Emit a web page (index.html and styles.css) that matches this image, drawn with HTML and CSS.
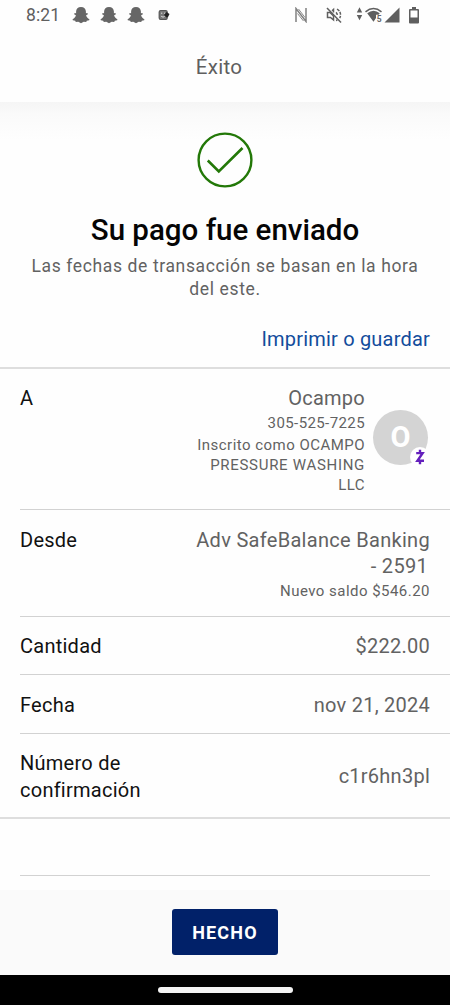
FILE: index.html
```html
<!DOCTYPE html>
<html lang="es">
<head>
<meta charset="utf-8">
<title>Éxito</title>
<link rel="stylesheet" href="styles.css">
</head>
<body>
<svg class="defs" aria-hidden="true">
  <symbol id="ghost" viewBox="0 0 18 18">
    <path d="M9 1C6 1 4.100 3 4.100 5.500V7.300L2.600 6.900 2.100 8.300 3.900 9.300C3.500 11 2.400 12.400.6 13.200L.8 14.300 3.200 14.800 3.800 15.900 6.300 15.700 9 17.300 11.700 15.700 14.200 15.900 14.800 14.800 17.200 14.300 17.400 13.200C15.600 12.400 14.500 11 14.100 9.300L15.900 8.300 15.400 6.900 13.900 7.300V5.500C13.900 3 12 1 9 1Z"/>
  </symbol>
</svg>
<div class="screen">
  <div class="status">
    <span class="time">8:21</span>
    <svg class="ghost"><use href="#ghost"/></svg>
    <svg class="ghost"><use href="#ghost"/></svg>
    <svg class="ghost"><use href="#ghost"/></svg>
    <svg class="note" viewBox="0 0 12 12">
      <rect x="1.200" y="1.500" width="8" height="9" rx="1.500" fill="#777" stroke="#555" stroke-width="1.200"/>
      <path d="M3 4.200h1.300M6 4.200h1.300M3.200 7.300q2 1.700 3.500 0" stroke="#ddd" fill="none"/>
      <path d="M6 6 8.500 3 11.500 5 10 8 8.500 8.500Z" fill="#222"/>
    </svg>
    <div class="system">
      <svg class="nfc" viewBox="0 0 14 16"><path d="M2 15V1.500L12 14.500V1" fill="none" stroke="#808080" stroke-width="1.500"/><path d="M4.500 2 11 10.500M3.500 6.500 9.500 14" fill="none" stroke="#8a8a8a"/></svg>
      <svg class="mute" viewBox="0 0 18 18" fill="none" stroke="#5f5f5f" stroke-width="1.500">
        <path d="M2 2 16 16.500"/><path d="M2.500 6.500H5L8.500 10V14L5.500 11.500H2.500Z"/><path d="M7 4.800 8.500 3.500V6.500"/><path d="M11 6.300q1.500 1.200 1.200 3.200M12 3.200q3.800 2 3.500 6.300-.1 1.500-.8 2.600M11 14.500q.8-.2 1.300-.6" stroke-dasharray="3 1"/>
      </svg>
      <svg class="signals" viewBox="0 0 46 18">
        <path d="M3.500 1.200 6.200 6.500H.8ZM.8 9H6.200L3.500 14.300Z" fill="#5f5f5f"/>
        <path d="M9.500 5.800Q17.500-.8 25.500 5.800" fill="none" stroke="#5f5f5f" stroke-width="1.500"/>
        <path d="M11.200 7.300Q17.500 2.300 23.800 7.300L22.500 8.800H20V12L17.500 15.800Z" fill="#5f5f5f"/>
        <text x="20.800" y="15.500" font-size="8.500" font-weight="700" fill="#666">5</text>
        <path d="M28.500 16.500 43.500 1.500V16.500Z" fill="#5f5f5f"/>
      </svg>
      <svg class="battery" viewBox="0 0 10 17"><path d="M3 0H7V2H9Q10 2 10 3V15.500Q10 16.500 9 16.500H1Q0 16.500 0 15.500V3Q0 2 1 2H3ZM1.500 3.500V10.500H8.500V3.500Z" fill="#5f5f5f" fill-rule="evenodd"/></svg>
    </div>
  </div>
  <header class="header">Éxito</header>
  <main class="content">
    <section class="hero">
      <svg class="check" viewBox="0 0 56 56" fill="none" stroke="#237808">
        <circle cx="28" cy="28" r="26.400" stroke-width="2.400"/>
        <path d="M10.800 28.500 21.800 39.500 45.500 16" stroke-width="2.600"/>
      </svg>
      <h1 class="title">Su pago fue enviado</h1>
      <p class="subtitle">Las fechas de transacción se basan en la hora del este.</p>
      <a class="print">Imprimir o guardar</a>
    </section>
    <section class="details">
      <div class="row row-to">
        <div class="label">A</div>
        <div class="value payee">
          <div>Ocampo</div>
          <div class="small phone">305-525-7225</div>
          <div class="small enrolled">Inscrito como OCAMPO <span class="company">PRESSURE WASHING</span> LLC</div>
        </div>
        <div class="avatar">O
          <svg class="zelle" viewBox="0 0 20 20"><circle cx="10" cy="10" r="10" fill="#fff"/><path d="M6.200 6.100H12.600L7.400 13.700H14M10 2.800V6M10 14V17.200" fill="none" stroke="#6420bd" stroke-width="2.400"/></svg>
        </div>
      </div>
      <div class="row row-from">
        <div class="label">Desde</div>
        <div class="value"><div class="account">Adv SafeBalance Banking<br><span class="digits">- 2591</span></div><div class="small">Nuevo saldo $546.20</div></div>
      </div>
      <div class="row"><div class="label">Cantidad</div><div class="value">$222.00</div></div>
      <div class="row row-date"><div class="label">Fecha</div><div class="value">nov 21, 2024</div></div>
      <div class="row row-code"><div class="label">Número de<br>confirmación</div><div class="value">c1r6hn3pl</div></div>
    </section>
    <div class="rule"></div>
  </main>
  <footer class="footer"><button class="done">HECHO</button></footer>
  <div class="navbar"><div class="handle"></div></div>
</div>
</body>
</html>
```
FILE: styles.css
```css
* { box-sizing: border-box; }
body { margin: 0; background: #fff; font-family: Roboto, sans-serif; color: #626262; }
.defs { position: absolute; width: 0; height: 0; }
.screen { width: 450px; height: 1005px; display: flex; flex-direction: column; overflow: hidden; background: #fefefe; }
.status { height: 32px; flex: none; display: flex; align-items: center; padding: 0 31px 2px 26px; }
.status svg { flex: none; }
.time { width: 46px; font-size: 17.5px; line-height: 30px; letter-spacing: .1px; color: #5f5f5f; }
.ghost { width: 18px; height: 18px; margin-right: 9.500px; fill: #666; }
.note { width: 12px; height: 12px; margin-left: 3px; }
.system { margin-left: auto; display: flex; align-items: center; }
.nfc { width: 14px; height: 16px; margin-right: 17px; }
.mute { width: 18px; height: 18px; margin-right: 13px; }
.signals { width: 46px; height: 18px; margin-right: 7px; }
.battery { width: 10px; height: 17px; }
.header { height: 70px; flex: none; text-align: center; font-size: 20.5px; line-height: 70px; padding-right: 12px; letter-spacing: .3px; color: #5f5f5f; }
.content { height: 788px; flex: none; background: linear-gradient(#f5f5f5, #fafafa 12px, #fefefe 38px); }
.hero { height: 265px; padding: 30px 20px 0; display: flex; flex-direction: column; align-items: center; }
.check { width: 56px; height: 56px; flex: none; }
.title { margin: 24px 0 0; font-size: 29.5px; line-height: 36px; font-weight: 500; color: #050505; white-space: nowrap; }
.subtitle { margin: 7px 0 0; width: 410px; font-size: 17.5px; line-height: 23px; letter-spacing: .62px; text-align: center; }
.print { margin-top: 24px; align-self: flex-end; font-size: 20px; line-height: 28px; letter-spacing: .2px; color: #134c9c; }
.details { border-top: 2px solid #dedede; border-bottom: 2px solid #dedede; padding-left: 20px; }
.row { height: 58px; padding: 2px 20px 0 0; display: flex; align-items: center; justify-content: space-between; border-bottom: 1px solid #d2d2d2; font-size: 20px; line-height: 26.500px; letter-spacing: .25px; }
.row:last-child { border-bottom: 0; }
.label { color: #111; }
.value { text-align: right; }
.small { font-size: 15px; line-height: 20px; letter-spacing: .47px; }
.row-to { height: 141px; align-items: flex-start; padding: 16px 22px 0 0; }
.payee { margin-left: auto; width: 180px; }
.phone { line-height: 23px; letter-spacing: .4px; }
.company { letter-spacing: .7px; }
.avatar { position: relative; flex: none; width: 55px; height: 55px; margin: 25px 0 0 8px; border-radius: 50%; background: #d4d4d4; color: #fff; font-size: 29px; line-height: 55px; font-weight: 700; text-align: center; letter-spacing: 0; }
.zelle { position: absolute; right: -2px; bottom: -2px; width: 20px; height: 20px; }
.row-from { height: 107px; align-items: flex-start; padding-top: 17px; }
.account { letter-spacing: .3px; line-height: 26px; }
.digits { padding-right: 2px; }
.row-from .small { line-height: 24px; }
.row-date { height: 59px; padding-top: 3px; }
.row-code { height: 83px; }
.rule { height: 1px; margin: 56px 20px 0; background: #d2d2d2; }
.footer { height: 85px; flex: none; display: flex; justify-content: center; padding-top: 19px; background: #fafafa; }
.done { width: 106px; height: 46px; padding: 2px 0 0; border: 0; border-radius: 3px; background: #012169; color: #fff; font: 700 18px/44px Roboto, sans-serif; letter-spacing: 1.200px; }
.navbar { height: 30px; flex: none; display: flex; justify-content: center; padding-top: 12px; background: #000; }
.handle { width: 135px; height: 6px; border-radius: 3px; background: #f3f3f3; }
```
